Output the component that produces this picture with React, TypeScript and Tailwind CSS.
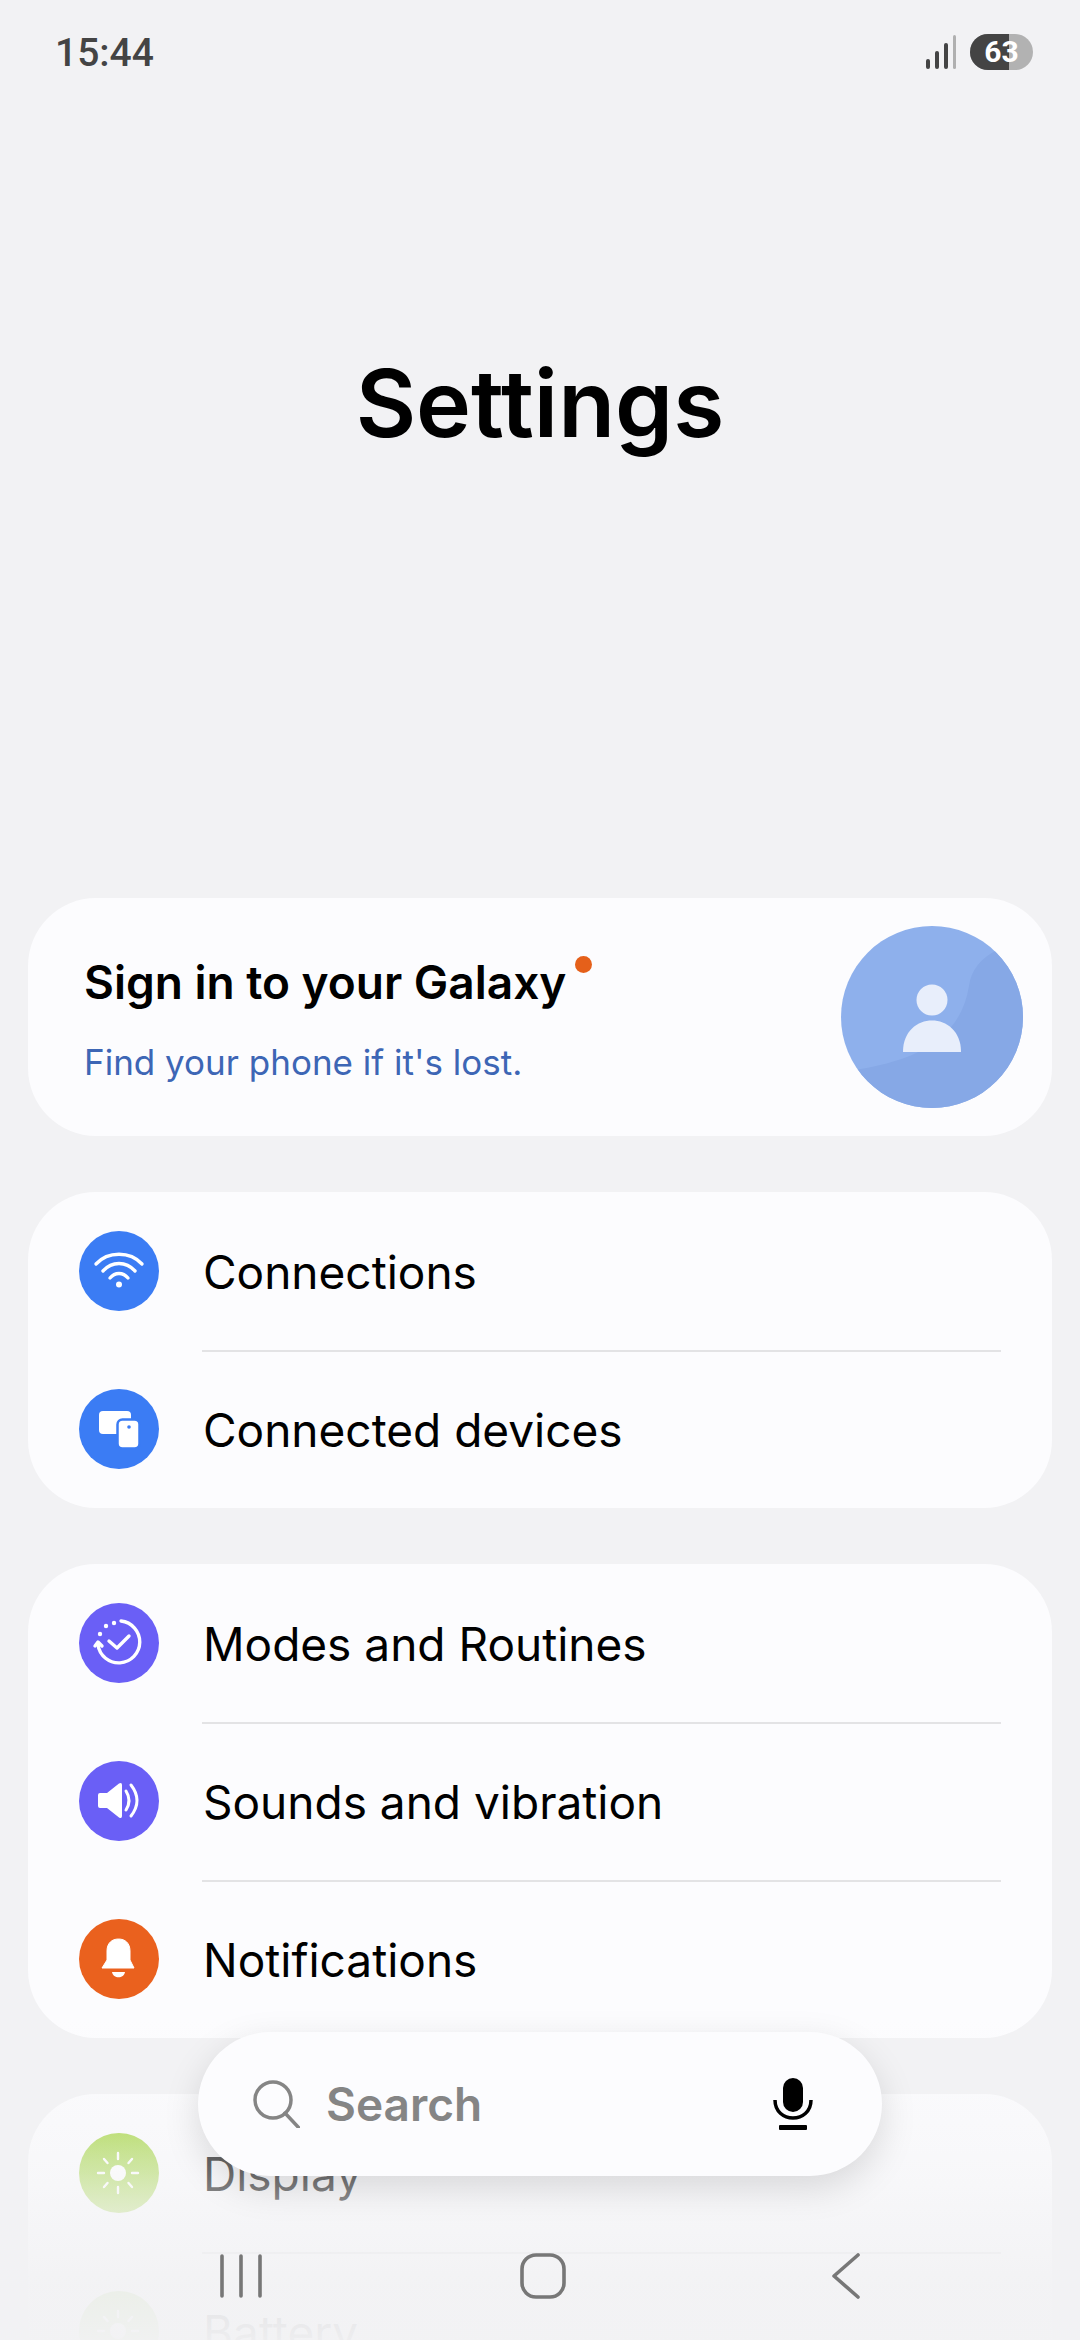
import { ReactNode } from "react";

const font = "font-['Inter','Noto_Sans',sans-serif]";

const Wifi = () => (
  <svg viewBox="0 0 80 80" className="w-full h-full" fill="none" stroke="#fff" strokeWidth="3.4" strokeLinecap="round">
    <path d="M17 33 C29 20 51 20 63 33" />
    <path d="M24 40 C33 30 47 30 56 40" />
    <path d="M31 47 C36 41 44 41 49 47" />
    <circle cx="40" cy="53.5" r="3" fill="#fff" stroke="none" />
  </svg>
);

const Devices = () => (
  <svg viewBox="0 0 80 80" className="w-full h-full">
    <rect x="20" y="22" width="32" height="23" rx="4" fill="#fff" />
    <rect x="38.5" y="30.5" width="22" height="29" rx="5" fill="#fff" stroke="#3b7cf4" strokeWidth="2.5" />
    <circle cx="50" cy="38" r="1.8" fill="#3b7cf4" />
  </svg>
);

const Modes = () => (
  <svg viewBox="0 0 80 80" className="w-full h-full" fill="none" stroke="#fff" strokeWidth="3.4" strokeLinecap="round" strokeLinejoin="round">
    <path d="M42 18 A21 21 0 1 1 19 42" />
    <path d="M16 43 L19 39 L23 43" />
    <path d="M30 38 L38 45 L50 33" />
    <circle cx="35" cy="20" r="2.2" fill="#fff" stroke="none" />
    <circle cx="27" cy="23" r="2.2" fill="#fff" stroke="none" />
    <circle cx="21" cy="31" r="2.2" fill="#fff" stroke="none" />
  </svg>
);

const Sound = () => (
  <svg viewBox="0 0 80 80" className="w-full h-full" fill="none">
    <path d="M19 34 Q19 32 21 32 L28 32 L40 22.5 Q43 21 43 24 L43 55 Q43 58 40 56.5 L28 47 L21 47 Q19 47 19 45 Z" fill="#fff" />
    <path d="M47 30 Q53 39.5 47 49" stroke="#fff" strokeWidth="3" strokeLinecap="round" />
    <path d="M52 24 Q64 39.5 52 55" stroke="#fff" strokeWidth="3" strokeLinecap="round" />
  </svg>
);

const Bell = () => (
  <svg viewBox="0 0 80 80" className="w-full h-full">
    <path d="M28 41 L28 32 C28 24 33 20 39.500 20 C46 20 51 24 51 32 L51 41 L55 49 L23 49 Z" fill="#fff" stroke="#fff" strokeLinejoin="round" strokeWidth="1" />
    <path d="M33 53 L46 53 C45 60 34 60 33 53 Z" fill="#fff" />
  </svg>
);

const Sun = () => (
  <svg viewBox="0 0 80 80" className="w-full h-full" fill="none" stroke="#fff" strokeWidth="2.4" strokeLinecap="round">
    <circle cx="39" cy="40" r="8" fill="#fff" stroke="none" />
    <path d="M39 20 V26 M39 54 V60 M19 40 H25 M53 40 H59 M25 26 L28.500 30 M53 26 L49.500 30 M25 54 L28.500 50 M53 54 L49.500 50" />
  </svg>
);

function Row({ icon, tint, label }: { icon: ReactNode; tint: string; label: string }) {
  return (
    <div className="flex h-[158px] items-center pl-[51px]">
      <div className={`h-20 w-20 shrink-0 rounded-full ${tint}`}>{icon}</div>
      <span className="ml-[44px] pt-[2px] text-[46px] leading-none text-black">{label}</span>
    </div>
  );
}

// no net height, so rows keep their 158px pitch
const Divider = () => <div className="-mb-[2px] ml-[174px] mr-[51px] h-[2px] bg-[#e3e3e5]" />;

export default function App() {
  return (
    <div className={`relative h-[2340px] w-[1080px] overflow-hidden bg-[#f2f2f4] ${font}`}>
      {/* Header */}
      <div className="h-[898px]">
        <div className="flex h-[104px] items-center justify-between pl-[55px] pr-[47px]">
          <span className="pt-[2px] font-['Roboto',sans-serif] text-[39px] font-medium leading-none text-[#444]">15:44</span>
          <div className="flex items-center gap-[14px]">
            <svg viewBox="0 0 30 34" className="h-[34px] w-[30px]">
              <rect x="0" y="24" width="4" height="10" rx="2" fill="#444" />
              <rect x="9" y="16" width="4" height="18" rx="2" fill="#444" />
              <rect x="18" y="8" width="4" height="26" rx="2" fill="#444" />
              <rect x="27" y="0" width="3" height="34" rx="1.500" fill="#b0b0b0" />
            </svg>
            <div className="relative flex h-9 w-[63px] items-center justify-center overflow-hidden rounded-[18px] bg-[#b2b2b2]">
              <div className="absolute inset-y-0 left-0 w-[39px] bg-[#444]" />
              <span className="relative font-['Roboto',sans-serif] text-[30px] font-bold leading-none text-white">63</span>
            </div>
          </div>
        </div>
        <div className="flex h-[598px] items-center justify-center">
          <h1 className="text-[93px] font-semibold leading-none text-black">Settings</h1>
        </div>
      </div>

      <div className="mx-[28px] flex flex-col gap-[56px]">
        {/* Account card */}
        <div className="flex h-[238px] items-center justify-between rounded-[68px] bg-[#fcfcfe] pl-[56px] pr-[29px]">
          <div className="pt-[4px]">
            <div className="relative inline-block text-[46px] font-semibold leading-none text-black">
              Sign in to your Galaxy
              <span className="absolute -right-[26px] -top-[3px] h-[17px] w-[17px] rounded-full bg-[#e5601a]" />
            </div>
            <div className="mt-[40px] text-[35px] leading-none text-[#3d66b5]">Find your phone if it's lost.</div>
          </div>
          <div className="relative h-[182px] w-[182px] overflow-hidden rounded-full bg-[#8eb0ec]">
            <svg viewBox="0 0 182 182" className="absolute inset-0 h-full w-full">
              <path d="M0 146 C60 138 118 122 128 60 C130 44 140 32 156 24 L182 60 L182 182 L0 182 Z" fill="#86a8e6" />
              <circle cx="91" cy="74" r="15.500" fill="#e8eefb" />
              <path d="M62 126 C62 84 120 84 120 126 Z" fill="#e8eefb" />
            </svg>
          </div>
        </div>

        <div className="rounded-[68px] bg-[#fcfcfe]">
          <Row icon={<Wifi />} tint="bg-[#3b7cf4]" label="Connections" />
          <Divider />
          <Row icon={<Devices />} tint="bg-[#3b7cf4]" label="Connected devices" />
        </div>

        <div className="rounded-[68px] bg-[#fcfcfe]">
          <Row icon={<Modes />} tint="bg-[#6a5ff6]" label="Modes and Routines" />
          <Divider />
          <Row icon={<Sound />} tint="bg-[#6a5ff6]" label="Sounds and vibration" />
          <Divider />
          <Row icon={<Bell />} tint="bg-[#ea611e]" label="Notifications" />
        </div>

        <div className="rounded-[68px] bg-[#fcfcfe]">
          <Row icon={<Sun />} tint="bg-linear-to-b from-[#a6d640] to-[#c4e38a]" label="Display" />
          <Divider />
          <Row icon={<Sun />} tint="bg-[#8bc34a]" label="Battery" />
        </div>
      </div>

      {/* Fade over the list */}
      <div className="absolute inset-x-0 bottom-0 h-[320px] bg-[linear-gradient(to_bottom,rgba(242,242,244,0)_0%,rgba(242,242,244,0.45)_48%,rgba(242,242,244,0.93)_82%,rgba(242,242,244,0.98)_100%)]" />

      {/* Floating search */}
      <div className="absolute left-[198px] top-[2032px] flex h-[144px] w-[684px] items-center rounded-[72px] bg-[#fcfcfe] pl-[54px] pr-[69px] shadow-[0_12px_36px_rgba(0,0,0,0.13)]">
        <svg viewBox="0 0 48 48" className="h-12 w-12 shrink-0" fill="none" stroke="#858585" strokeWidth="3.500" strokeLinecap="round">
          <circle cx="21" cy="20" r="18" />
          <path d="M33 33 L47 48" />
        </svg>
        <span className="ml-[26px] flex-1 text-[46px] font-semibold leading-none text-[#858585]">Search</span>
        <svg viewBox="0 0 40 52" className="h-[52px] w-10 shrink-0" fill="none">
          <rect x="10" y="0" width="20" height="34" rx="10" fill="#000" />
          <path d="M2 22 C2 46 38 46 38 22" stroke="#000" strokeWidth="3.500" />
          <rect x="6" y="47" width="28" height="5" rx="1" fill="#000" />
        </svg>
      </div>

      {/* Navigation bar */}
      <div className="absolute left-[220px] top-[2253px] flex h-[46px] items-center">
        <svg viewBox="0 0 42 46" className="h-[46px] w-[42px]" fill="none" stroke="#777" strokeWidth="3.600" strokeLinecap="round">
          <path d="M2 3 V43 M21 3 V43 M40 3 V43" />
        </svg>
        <svg viewBox="0 0 46 46" className="ml-[258px] h-[46px] w-[46px]" fill="none" stroke="#777" strokeWidth="3.600">
          <rect x="2" y="2" width="42" height="42" rx="14" />
        </svg>
        <svg viewBox="0 0 28 46" className="ml-[266px] h-[46px] w-[28px]" fill="none" stroke="#777" strokeWidth="3.600" strokeLinecap="round" strokeLinejoin="round">
          <path d="M26 2 L2 23 L26 44" />
        </svg>
      </div>
    </div>
  );
}
